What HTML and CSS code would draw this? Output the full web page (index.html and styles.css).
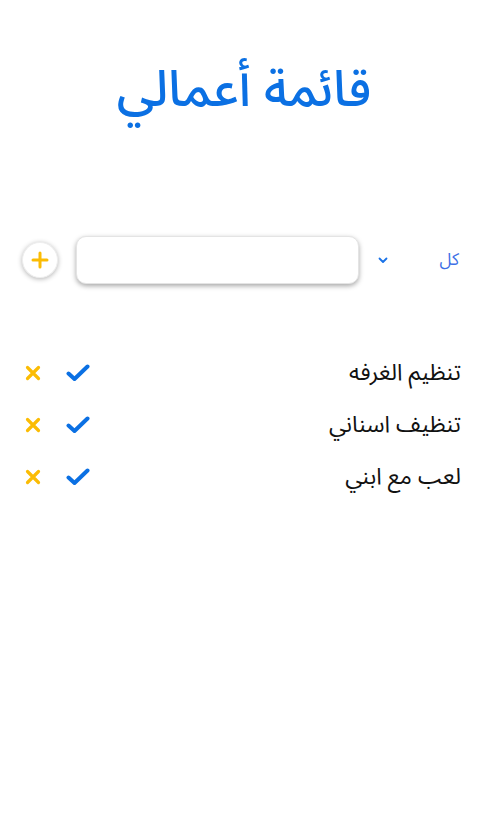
FILE: index.html
```
<!DOCTYPE html>
<html lang="ar" dir="rtl">
<head>
<meta charset="utf-8">
<title>قائمة أعمالي</title>
<link rel="stylesheet" href="styles.css">
</head>
<body>
<main class="app">
  <h1 class="title">قائمة أعمالي</h1>
  <div class="controls">
    <div class="filter">
      <span class="filter-label">كل</span>
      <svg class="chevron" width="10" height="7" viewBox="0 0 10 7"><path d="M1.5 1.5 L5 5 L8.5 1.5" fill="none" stroke="#1a73e8" stroke-width="1.8" stroke-linecap="round" stroke-linejoin="round"/></svg>
    </div>
    <input class="task-input" type="text">
    <button class="add-btn" type="button">
      <svg width="18" height="18" viewBox="0 0 18 18"><path d="M9 2 V16 M2 9 H16" stroke="#fbbc04" stroke-width="3" stroke-linecap="round"/></svg>
    </button>
  </div>
  <ul class="tasks">
    <li class="task"><span class="task-text">تنظيم الغرفه</span><span class="actions"><svg class="check" width="24" height="18" viewBox="0 0 24 18"><path d="M2.5 9.5 L8.5 15 L21.5 2.5" fill="none" stroke="#0b70e3" stroke-width="4" stroke-linecap="round" stroke-linejoin="round"/></svg><svg class="cross" width="16" height="16" viewBox="0 0 16 16"><path d="M2.5 2.5 L13.5 13.5 M13.5 2.5 L2.5 13.5" stroke="#fbbc04" stroke-width="3.2" stroke-linecap="round"/></svg></span></li>
    <li class="task"><span class="task-text">تنظيف اسناني</span><span class="actions"><svg class="check" width="24" height="18" viewBox="0 0 24 18"><path d="M2.5 9.5 L8.5 15 L21.5 2.5" fill="none" stroke="#0b70e3" stroke-width="4" stroke-linecap="round" stroke-linejoin="round"/></svg><svg class="cross" width="16" height="16" viewBox="0 0 16 16"><path d="M2.5 2.5 L13.5 13.5 M13.5 2.5 L2.5 13.5" stroke="#fbbc04" stroke-width="3.2" stroke-linecap="round"/></svg></span></li>
    <li class="task"><span class="task-text">لعب مع ابني</span><span class="actions"><svg class="check" width="24" height="18" viewBox="0 0 24 18"><path d="M2.5 9.5 L8.5 15 L21.5 2.5" fill="none" stroke="#0b70e3" stroke-width="4" stroke-linecap="round" stroke-linejoin="round"/></svg><svg class="cross" width="16" height="16" viewBox="0 0 16 16"><path d="M2.5 2.5 L13.5 13.5 M13.5 2.5 L2.5 13.5" stroke="#fbbc04" stroke-width="3.2" stroke-linecap="round"/></svg></span></li>
  </ul>
</main>
</body>
</html>
```
FILE: styles.css
```
* { box-sizing: border-box; }
html, body { margin: 0; padding: 0; background: #fff; }
body {
  font-family: "Noto Sans Arabic", "DejaVu Sans", "Noto Sans", sans-serif;
  color: #111;
}
.app { width: 488px; padding-top: 58px; }
.title {
  margin: 0;
  text-align: center;
  font-size: 50px;
  font-weight: 500;
  color: #0b70e3;
  line-height: 64px;
}
.controls {
  display: flex;
  align-items: center;
  margin-top: 114px;
  padding: 0 23px 0 22px;
  gap: 16px;
}
.filter {
  display: flex;
  align-items: center;
  justify-content: space-between;
  width: 90px;
  padding: 0 6px 0 3px;
}
.filter-label { color: #3d6fe6; font-size: 17px; }
.chevron { display: block; }
.task-input {
  width: 284px;
  height: 48px;
  border: 1px solid #e4e4e4;
  border-radius: 10px;
  box-shadow: 0 2px 5px rgba(0,0,0,0.35);
  background: #fff;
  outline: none;
}
.add-btn {
  width: 36px;
  height: 36px;
  border-radius: 50%;
  border: 1px solid #eee;
  background: #fff;
  box-shadow: 0 1px 5px rgba(0,0,0,0.3);
  display: flex;
  align-items: center;
  justify-content: center;
  padding: 0;
  margin-right: 2px;
}
.tasks {
  list-style: none;
  margin: 63px 0 0;
  padding: 0 27px 0 25px;
}
.task {
  display: flex;
  align-items: center;
  justify-content: space-between;
  height: 52px;
}
.task-text { font-size: 23px; line-height: 30px; }
.actions { display: flex; align-items: center; gap: 25px; }
.check, .cross { display: block; }
```
